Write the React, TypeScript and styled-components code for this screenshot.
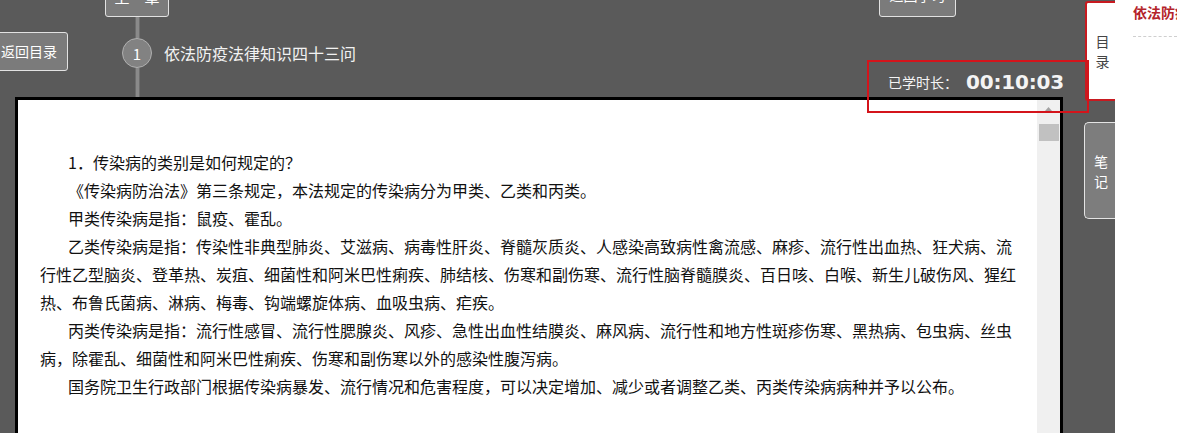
import React from "react";
import styled, { createGlobalStyle } from "styled-components";

const GlobalStyle = createGlobalStyle`
    html, body {
        margin: 0;
        padding: 0;
        background: #fff;
    }
    body {
        font-family: "Noto Sans CJK SC", "Liberation Sans", sans-serif;
    }
`;

const Page = styled.div`
    display: flex;
    height: 433px;
    overflow: hidden;
`;

const Main = styled.div`
    position: relative;
    flex: 0 0 1115px;
    display: flex;
    background: #5a5a5a;
`;

const Stage = styled.div`
    width: 1063px;
    display: flex;
    flex-direction: column;
`;

const Header = styled.div`
    height: 97px;
    flex-shrink: 0;
    display: flex;
    align-items: flex-start;
`;

const GreyButton = styled.div`
    box-sizing: border-box;
    background: #7b7b7b;
    border: 1px solid #e2e2e2;
    border-radius: 3px;
    color: #fff;
    font-size: 14px;
    white-space: nowrap;
`;

const BackButton = styled(GreyButton)`
    margin: 32px 0 0 -10px;
    height: 39px;
    line-height: 37px;
    padding: 0 10px;
`;

const Timeline = styled.div`
    margin-left: 37px;
    width: 64px;
    height: 97px;
    display: flex;
    flex-direction: column;
    align-items: center;
`;

const ChapterButton = styled(GreyButton)`
    width: 64px;
    height: 34px;
    margin-top: -17px;
    line-height: 0;
    padding-top: 13px;
    text-align: center;
    font-size: 15px;
    border-radius: 0 0 3px 3px;
`;

const Stem = styled.div<{ $grow?: boolean }>`
    width: 5px;
    height: 21px;
    flex: ${(p) => (p.$grow ? "1" : "0 0 21px")};
    background: #8a8a8a;
    border-left: 1px solid #6e6e6e;
    border-right: 1px solid #6e6e6e;
    box-sizing: border-box;
`;

const NodeRow = styled.div`
    align-self: flex-start;
    width: max-content;
    height: 30px;
    display: flex;
    align-items: center;
    gap: 12px;
    padding-left: 17px;
`;

const NodeCircle = styled.div`
    box-sizing: border-box;
    width: 30px;
    height: 30px;
    border-radius: 50%;
    background: #828282;
    border: 1px solid #b0b0b0;
    color: #fff;
    font-size: 15px;
    display: flex;
    align-items: center;
    justify-content: center;
`;

const ChapterTitle = styled.div`
    color: #f2f2f2;
    font-size: 16px;
    white-space: nowrap;
`;

const ReturnButton = styled(GreyButton)`
    margin: -17px 107px 0 auto;
    width: 77px;
    height: 34px;
    text-align: center;
    line-height: 0;
    padding-top: 11px;
`;

const ContentBox = styled.div`
    margin-left: 15px;
    flex: 1;
    display: flex;
    background: #fff;
    border: 3px solid #000;
    border-bottom: none;
    min-height: 0;
`;

const Article = styled.div`
    flex: 1;
    padding: 48px 21px 0 22px;
    color: #111;
    font-size: 16px;
    line-height: 28px;
`;

const Para = styled.p`
    margin: 0;
    text-indent: 28px;
`;

const Scrollbar = styled.div`
    width: 23px;
    flex-shrink: 0;
    background: #f0f0f0;
    display: flex;
    flex-direction: column;
    align-items: center;
`;

const ScrollArrow = styled.div`
    height: 17px;
    width: 100%;
    display: flex;
    align-items: center;
    justify-content: center;
`;

const ScrollThumb = styled.div`
    margin-top: 7px;
    width: 20px;
    height: 17px;
    background: #c1c1c1;
`;

const SideTabs = styled.div`
    flex: 1;
    display: flex;
    flex-direction: column;
    align-items: flex-end;
    padding-top: 1px;
`;

const Tab = styled.div<{ $active?: boolean }>`
    box-sizing: border-box;
    display: flex;
    align-items: center;
    justify-content: center;
    font-size: 14px;
    line-height: 20px;
    ${(p) =>
        p.$active
            ? `
        width: 30px;
        height: 100px;
        padding-left: 3px;
        background: #fff;
        color: #444;
        border: 2px solid #c81a20;
        border-right: none;
        border-radius: 3px 0 0 3px;
    `
            : `
        width: 31px;
        height: 97px;
        margin-top: 21px;
        padding-left: 2px;
        background: #7d7d7d;
        color: #fff;
        border: 1px solid #e4e4e4;
        border-right: none;
        border-radius: 5px 0 0 5px;
    `}
`;

const TabLabel = styled.span`
    width: 14px;
    text-align: center;
`;

const Timer = styled.div`
    position: absolute;
    left: 867px;
    top: 60px;
    width: 222px;
    height: 53px;
    box-sizing: border-box;
    border: 2px solid #d4141b;
    display: flex;
    align-items: center;
    padding: 0 0 9px 19px;
    color: #f4f4f4;
    z-index: 2;
`;

const TimerLabel = styled.span`
    font-size: 14px;
`;

const TimerValue = styled.span`
    margin-left: 8px;
    font-family: "DejaVu Sans", "Liberation Sans", sans-serif;
    font-weight: bold;
    font-size: 20px;
    letter-spacing: -0.2px;
`;

const TocPanel = styled.div`
    flex: 1;
    background: #fff;
    padding-left: 18px;
    overflow: hidden;
`;

const TocTitle = styled.div`
    height: 36px;
    line-height: 24px;
    color: #b4232a;
    font-size: 14px;
    font-weight: bold;
    white-space: nowrap;
    border-bottom: 1px dashed #cfcfcf;
`;

const App = () => {
    return (
        <>
            <GlobalStyle />
            <Page>
                <Main>
                    <Stage>
                        <Header>
                            <BackButton>返回目录</BackButton>
                            <Timeline>
                                <ChapterButton>上一章</ChapterButton>
                                <Stem />
                                <NodeRow>
                                    <NodeCircle>1</NodeCircle>
                                    <ChapterTitle>依法防疫法律知识四十三问</ChapterTitle>
                                </NodeRow>
                                <Stem $grow />
                            </Timeline>
                            <ReturnButton>返回学习</ReturnButton>
                        </Header>
                        <ContentBox>
                            <Article>
                                <Para>1．传染病的类别是如何规定的？</Para>
                                <Para>《传染病防治法》第三条规定，本法规定的传染病分为甲类、乙类和丙类。</Para>
                                <Para>甲类传染病是指：鼠疫、霍乱。</Para>
                                <Para>
                                    乙类传染病是指：传染性非典型肺炎、艾滋病、病毒性肝炎、脊髓灰质炎、人感染高致病性禽流感、麻疹、流行性出血热、狂犬病、流行性乙型脑炎、登革热、炭疽、细菌性和阿米巴性痢疾、肺结核、伤寒和副伤寒、流行性脑脊髓膜炎、百日咳、白喉、新生儿破伤风、猩红热、布鲁氏菌病、淋病、梅毒、钩端螺旋体病、血吸虫病、疟疾。
                                </Para>
                                <Para>
                                    丙类传染病是指：流行性感冒、流行性腮腺炎、风疹、急性出血性结膜炎、麻风病、流行性和地方性斑疹伤寒、黑热病、包虫病、丝虫病，除霍乱、细菌性和阿米巴性痢疾、伤寒和副伤寒以外的感染性腹泻病。
                                </Para>
                                <Para>
                                    国务院卫生行政部门根据传染病暴发、流行情况和危害程度，可以决定增加、减少或者调整乙类、丙类传染病病种并予以公布。
                                </Para>
                            </Article>
                            <Scrollbar>
                                <ScrollArrow>
                                    <svg width="7" height="4" viewBox="0 0 7 4">
                                        <path d="M0 4 L3.5 0 L7 4 Z" fill="#a3a3a3" />
                                    </svg>
                                </ScrollArrow>
                                <ScrollThumb />
                            </Scrollbar>
                        </ContentBox>
                    </Stage>
                    <SideTabs>
                        <Tab $active>
                            <TabLabel>目录</TabLabel>
                        </Tab>
                        <Tab>
                            <TabLabel>笔记</TabLabel>
                        </Tab>
                    </SideTabs>
                    <Timer>
                        <TimerLabel>已学时长：</TimerLabel>
                        <TimerValue>00:10:03</TimerValue>
                    </Timer>
                </Main>
                <TocPanel>
                    <TocTitle>依法防疫法律知识四十三问</TocTitle>
                </TocPanel>
            </Page>
        </>
    );
};

export default App;
